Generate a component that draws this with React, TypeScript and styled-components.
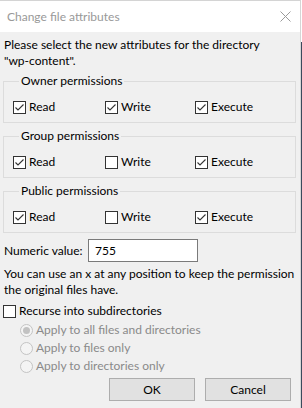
import React from "react";
import styled, { createGlobalStyle } from "styled-components";

const Global = createGlobalStyle`
  html, body { margin: 0; padding: 0; background: #ffffff; }
  body { font-family: Lato, "Noto Sans", "Liberation Sans", sans-serif; font-size: 12px; color: #000; }
  * { box-sizing: border-box; }
`;

const Page = styled.div`
  display: flex;
  width: 302px;
  height: 408px;
  overflow: hidden;
`;

const Dialog = styled.div`
  width: 301px;
  height: 408px;
  display: flex;
  flex-direction: column;
  background: #f0f0f0;
  border-top: 1px solid #d4d4d4;
  border-right: 1px solid #d6d6d6;
  white-space: nowrap;
`;

const Backdrop = styled.div`
  width: 1px;
  height: 408px;
  background: linear-gradient(#ffffff 0 42px, #3b4a5c 42px);
`;

const TitleBar = styled.div`
  height: 31px;
  flex: none;
  background: #ffffff;
  display: flex;
  align-items: center;
  justify-content: space-between;
  padding: 0 9px 0 7px;
  color: #999999;
  font-size: 12px;
`;

const CloseIcon = () => (
  <svg width="11" height="11" viewBox="0 0 11 11">
    <path d="M0.5 0.5 L10.5 10.5 M10.5 0.5 L0.5 10.5" stroke="#9a9a9a" strokeWidth="1" fill="none" />
  </svg>
);

const Body = styled.div`
  flex: 1;
  display: flex;
  flex-direction: column;
  padding: 5px 9px 0 4px;
  line-height: 16px;
`;

const Intro = styled.div`
  margin-bottom: 4px;
`;

const Group = styled.fieldset`
  margin: 0 0 0 -1px;
  padding: 10px 0 7px 9px;
  border: 1px solid #dcdcdc;
  width: 293px;
  min-width: 0;
  & + & { margin-top: 5px; }
`;

const Legend = styled.legend`
  margin-left: 6px;
  padding: 0 2px;
  line-height: 16px;
`;

const CheckRow = styled.div`
  display: grid;
  grid-template-columns: 92px 90px auto;
  height: 16px;
`;

const CheckLabel = styled.label`
  display: flex;
  align-items: center;
  gap: 3px;
  height: 16px;
`;

const Box = styled.span`
  width: 13px;
  height: 13px;
  flex: none;
  border: 1px solid #333333;
  background: #ffffff;
  display: flex;
  align-items: center;
  justify-content: center;
`;

const Check = ({ on }: { on: boolean }) => (
  <Box>
    {on && (
      <svg width="11" height="11" viewBox="0 0 11 11">
        <path d="M1.5 5.5 L4 8 L9.5 2.5" stroke="#333333" strokeWidth="1.1" fill="none" />
      </svg>
    )}
  </Box>
);

const NumericRow = styled.div`
  display: flex;
  align-items: center;
  height: 23px;
  margin-top: 6px;
`;

const NumericLabel = styled.span`
  width: 84px;
  flex: none;
`;

const NumericInput = styled.div`
  width: 110px;
  height: 23px;
  border: 1px solid #7a7a7a;
  background: #ffffff;
  padding: 0 6px;
  display: flex;
  align-items: center;
`;

const Help = styled.div`
  margin-top: 4px;
`;

const RecurseLabel = styled(CheckLabel)`
  margin-top: 5px;
  margin-left: -1px;
`;

const RadioList = styled.div`
  display: flex;
  flex-direction: column;
  margin-top: 2px;
  padding-left: 16px;
`;

const RadioRow = styled.label`
  display: flex;
  align-items: center;
  gap: 3px;
  height: 18px;
  color: #8a8a8a;
`;

const RadioCircle = styled.span<{ $on: boolean }>`
  width: 13px;
  height: 13px;
  flex: none;
  border-radius: 50%;
  border: 1px solid #c4c4c4;
  background: #f4f4f4;
  display: flex;
  align-items: center;
  justify-content: center;
  &::after {
    content: "";
    width: 7px;
    height: 7px;
    border-radius: 50%;
    background: ${(p) => (p.$on ? "#c2c2c2" : "transparent")};
  }
`;

const Buttons = styled.div`
  display: flex;
  justify-content: flex-end;
  gap: 10px;
  margin-top: 3px;
`;

const Button = styled.button`
  width: 86px;
  height: 23px;
  border: 1px solid #adadad;
  background: #e1e1e1;
  font-family: inherit;
  font-size: 12px;
  color: #000;
  padding: 0;
`;

const groups: { title: string; vals: [boolean, boolean, boolean] }[] = [
  { title: "Owner permissions", vals: [true, true, true] },
  { title: "Group permissions", vals: [true, false, true] },
  { title: "Public permissions", vals: [true, false, true] },
];

const names = ["Read", "Write", "Execute"];

export default function App() {
  return (
    <Page>
      <Global />
      <Dialog>
        <TitleBar>
          <span>Change file attributes</span>
          <CloseIcon />
        </TitleBar>
        <Body>
          <Intro>
            Please select the new attributes for the directory
            <br />
            "wp-content".
          </Intro>
          {groups.map((g) => (
            <Group key={g.title}>
              <Legend>{g.title}</Legend>
              <CheckRow>
                {names.map((n, i) => (
                  <CheckLabel key={n}>
                    <Check on={g.vals[i]} />
                    {n}
                  </CheckLabel>
                ))}
              </CheckRow>
            </Group>
          ))}
          <NumericRow>
            <NumericLabel>Numeric value:</NumericLabel>
            <NumericInput>755</NumericInput>
          </NumericRow>
          <Help>
            You can use an x at any position to keep the permission
            <br />
            the original files have.
          </Help>
          <RecurseLabel>
            <Check on={false} />
            Recurse into subdirectories
          </RecurseLabel>
          <RadioList>
            <RadioRow>
              <RadioCircle $on={true} />
              Apply to all files and directories
            </RadioRow>
            <RadioRow>
              <RadioCircle $on={false} />
              Apply to files only
            </RadioRow>
            <RadioRow>
              <RadioCircle $on={false} />
              Apply to directories only
            </RadioRow>
          </RadioList>
          <Buttons>
            <Button>OK</Button>
            <Button>Cancel</Button>
          </Buttons>
        </Body>
      </Dialog>
      <Backdrop />
    </Page>
  );
}
